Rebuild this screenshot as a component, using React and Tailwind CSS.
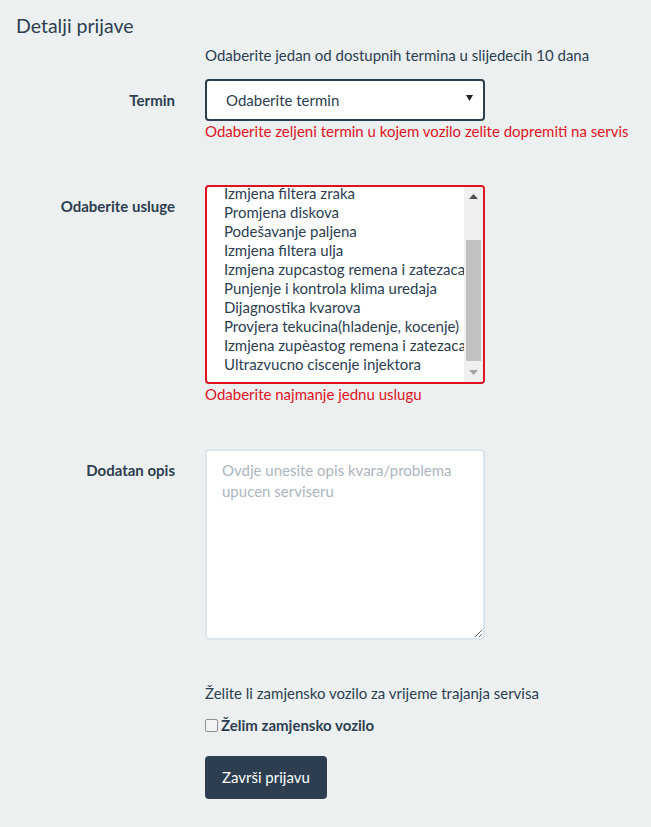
import React from "react";

const services = [
  "Izmjena filtera zraka",
  "Promjena diskova",
  "Podešavanje paljena",
  "Izmjena filtera ulja",
  "Izmjena zupcastog remena i zatezaca",
  "Punjenje i kontrola klima uredaja",
  "Dijagnostika kvarova",
  "Provjera tekucina(hladenje, kocenje)",
  "Izmjena zupèastog remena i zatezaca",
  "Ultrazvucno ciscenje injektora",
];

function Row({ label, children }) {
  return (
    <div className="flex">
      <div className="w-[190px] shrink-0 pr-[15px] text-right">
        {label && (
          <div className="pt-[11px] font-bold leading-[21px]">{label}</div>
        )}
      </div>
      <div className="w-[310px] pl-[15px]">{children}</div>
    </div>
  );
}

export default function App() {
  return (
    <div
      className="min-h-[827px] w-[651px] overflow-hidden bg-[#ecf0f1] text-[15px] text-[#2c3e50]"
      style={{ fontFamily: "Lato, 'Open Sans', sans-serif" }}
    >
      <div className="pl-[16px] pt-[15px] text-[19.5px] leading-[22px]">Detalji prijave</div>

      <div className="mt-[8px]">
        <Row>
          <div className="whitespace-nowrap leading-[21px]">
            Odaberite jedan od dostupnih termina u slijedecih 10 dana
          </div>
        </Row>
      </div>

      <div className="mt-[13px]">
        <Row label="Termin">
          <div className="flex h-[42px] w-[280px] items-center justify-between rounded-[4px] border-2 border-[#2c3e50] bg-white pl-[19px] pr-[10px]">
            <span>Odaberite termin</span>
            <svg width="7" height="6" viewBox="0 0 7 6" className="mb-[4px]">
              <path d="M0 0 L7 0 L3.5 6 Z" fill="#222" />
            </svg>
          </div>
          <div className="whitespace-nowrap leading-[21px] text-[#e0141e]">
            Odaberite zeljeni termin u kojem vozilo zelite dopremiti na servis
          </div>
        </Row>
      </div>

      <div className="mt-[43px]">
        <Row label="Odaberite usluge">
          <div className="flex h-[199px] w-[280px] overflow-hidden rounded-[4px] border-2 border-[#e0141e] bg-white">
            <div className="flex-1 overflow-hidden pl-[17px]">
              <div className="-mt-[3px]">
                {services.map((s) => (
                  <div key={s} className="h-[19px] whitespace-nowrap leading-[19px]">
                    {s}
                  </div>
                ))}
              </div>
            </div>
            <div className="flex w-[19px] flex-col items-center bg-[#f0f0f0]">
              <div className="flex h-[19px] w-full items-center justify-center">
                <svg width="9" height="5" viewBox="0 0 9 5">
                  <path d="M0 5 L9 5 L4.5 0 Z" fill="#505050" />
                </svg>
              </div>
              <div className="mt-[34px] h-[121px] w-[15px] bg-[#c1c1c1]" />
              <div className="mt-auto flex h-[19px] w-full items-center justify-center">
                <svg width="9" height="5" viewBox="0 0 9 5">
                  <path d="M0 0 L9 0 L4.5 5 Z" fill="#a3a3a3" />
                </svg>
              </div>
            </div>
          </div>
          <div className="leading-[21px] text-[#e0141e]">Odaberite najmanje jednu uslugu</div>
        </Row>
      </div>

      <div className="mt-[44px]">
        <Row label="Dodatan opis">
          <textarea
            className="block h-[191px] w-[280px] rounded-[4px] border-2 border-[#dce4ec] bg-white px-[15px] py-[9px] leading-[21px] text-[#2c3e50] outline-none placeholder:text-[#acb6c0]"
            placeholder="Ovdje unesite opis kvara/problema upucen serviseru"
          />
        </Row>
      </div>

      <div className="mt-[43px]">
        <Row>
          <div className="whitespace-nowrap leading-[21px]">
            Želite li zamjensko vozilo za vrijeme trajanja servisa
          </div>
          <div className="mt-[11px] flex items-center leading-[21px]">
            <div className="mr-[3px] h-[13px] w-[13px] rounded-[2px] border border-[#8f8f8f] bg-[#f3f3f3]" />
            <span className="font-bold">Želim zamjensko vozilo</span>
          </div>
          <button className="mt-[20px] h-[43px] rounded-[4px] bg-[#2c3e50] px-[17px] text-[15px] text-white">
            Završi prijavu
          </button>
        </Row>
      </div>
    </div>
  );
}
